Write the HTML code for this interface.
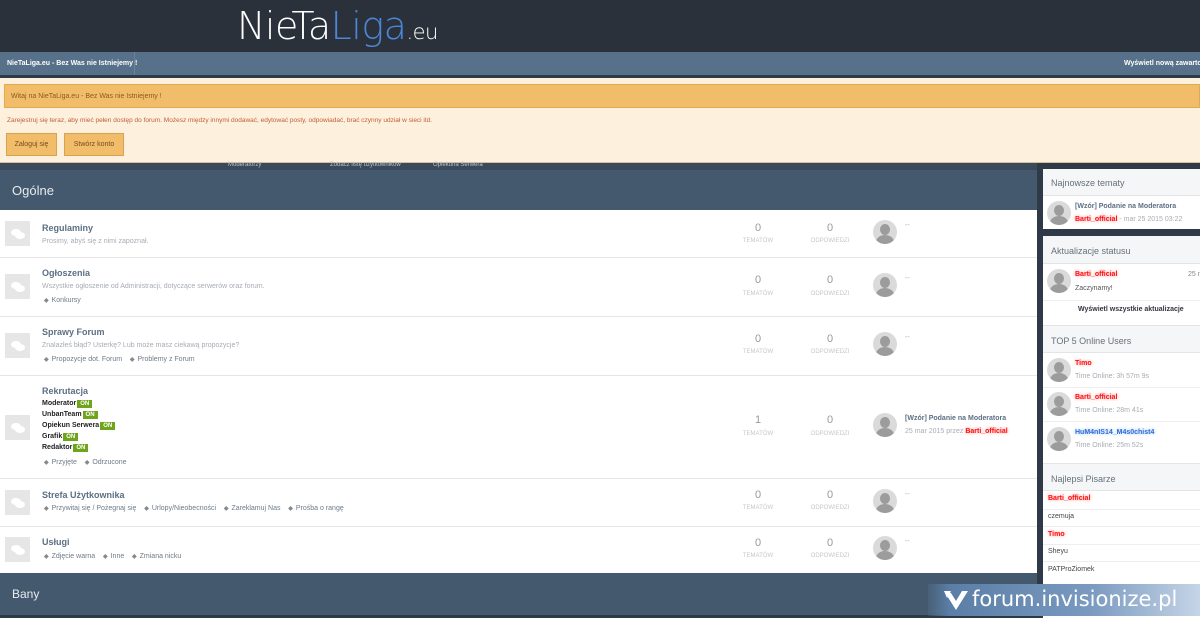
<!DOCTYPE html>
<html><head><meta charset="utf-8"><style>
*{margin:0;padding:0;box-sizing:border-box}
body{width:1200px;height:618px;overflow:hidden;position:relative;background:#2e3a47;font-family:"Liberation Sans",sans-serif;}
.a{position:absolute;white-space:nowrap}
.row{position:absolute;left:0;width:1037px;background:#fff;border-bottom:1px solid #e6e6e6}
.ic{position:absolute;left:5px;width:25px;height:25px;background:#e6e6e6}
.ic:after{content:"";position:absolute;left:6px;top:8px;width:10px;height:7px;background:#fff;border-radius:50%;box-shadow:4px 3px 0 #fff}
.t{font-size:9px;font-weight:bold;color:#5b6f84}
.d{font-size:7px;color:#a7acb3}
.s{font-size:7px;color:#6d7b8a}
.s b{color:#888;font-size:6px;margin-right:3px}
.n{font-size:11px;color:#999;text-align:center;width:60px}
.l{font-size:6px;color:#c7c7c7;text-align:center;width:60px}
.av{position:absolute;width:24px;height:24px;border-radius:50%;background:#dadada;overflow:hidden}
.av:before{content:"";position:absolute;left:7px;top:4px;width:10px;height:11px;border-radius:50%;background:#9c9c9c}
.av:after{content:"";position:absolute;left:3px;top:15px;width:18px;height:14px;border-radius:50%;background:#9c9c9c}
.on{background:#6ea51d;color:#fff;font-size:6px;padding:1px 3px;margin-left:1px}
.k{font-size:7px;color:#222;font-weight:bold}
.red{color:#f11;font-weight:bold;text-shadow:0 0 3px #f88}
.sb{position:absolute;left:1043px;width:157px;background:#fff}
.sh{position:absolute;left:1043px;width:157px;background:#f5f6f7;border-bottom:1px solid #e4e4e4;font-size:9px;color:#66707a;padding-left:8px}
.btn{position:absolute;top:133px;height:23px;background:#f2bd6a;border:1px solid #d9a24e;font-size:7px;color:#7a4a1a;text-align:center;line-height:21px}
</style></head><body>
<div class="a" style="left:0;top:0;width:1200px;height:52px;background:#2b313b"></div>
<div class="a" style="left:237px;top:4px;font-size:38px;color:#fff;letter-spacing:-0.5px;font-family:'DejaVu Sans',sans-serif;font-weight:200">NieTa<span style="color:#4d86d6">Liga</span><span style="font-size:21px">.eu</span></div>
<div class="a" style="left:0;top:52px;width:1200px;height:23px;background:#57718a"></div>
<div class="a" style="left:0;top:52px;width:135px;height:23px;border-right:1px solid #6a839b"></div>
<div class="a" style="left:7px;top:60px;font-size:7px;color:#fff;font-weight:bold">NieTaLiga.eu - Bez Was nie Istniejemy !</div>
<div class="a" style="left:1124px;top:60px;font-size:7px;color:#fff;font-weight:bold">Wyświetl nową zawartość</div>
<div class="a" style="left:0;top:78px;width:1200px;height:85px;background:#fdf0dc;border-bottom:1px solid #d6c09a"></div>
<div class="a" style="left:4px;top:84px;width:1196px;height:24px;background:#f2bd6a;border:1px solid #e3a94c"></div>
<div class="a" style="left:11px;top:93px;font-size:7px;color:#8a5a1e">Witaj na NieTaLiga.eu - Bez Was nie Istniejemy !</div>
<div class="a" style="left:7px;top:117px;font-size:6.5px;color:#c0603a">Zarejestruj się teraz, aby mieć pełen dostęp do forum. Możesz między innymi dodawać, edytować posty, odpowiadać, brać czynny udział w sieci itd.</div>
<div class="btn" style="left:6px;width:51px">Zaloguj się</div>
<div class="btn" style="left:64px;width:60px">Stwórz konto</div>
<div class="a" style="left:0;top:163px;width:1037px;height:7px;background:#3b4a5a"></div>
<div class="a" style="left:228px;top:162px;font-size:6px;color:#b8c2cc">Moderatorzy</div>
<div class="a" style="left:330px;top:162px;font-size:6px;color:#b8c2cc">Zobacz listę użytkowników</div>
<div class="a" style="left:433px;top:162px;font-size:6px;color:#b8c2cc">Opiekuna Serwera</div>
<div class="a" style="left:0;top:170px;width:1037px;height:40px;background:#44596d"></div>
<div class="a" style="left:12px;top:183px;font-size:13px;color:#e6ebf0">Ogólne</div>

<div class="row" style="top:210px;height:48px"></div>
<div class="row" style="top:258px;height:59px"></div>
<div class="row" style="top:317px;height:59px"></div>
<div class="row" style="top:376px;height:103px"></div>
<div class="row" style="top:479px;height:48px"></div>
<div class="row" style="top:527px;height:46px;border:0"></div>

<div class="ic" style="top:221px"></div>
<div class="a t" style="left:42px;top:223px">Regulaminy</div>
<div class="a d" style="left:42px;top:238px">Prosimy, abyś się z nimi zapoznał.</div>
<div class="a n" style="left:728px;top:222px">0</div><div class="a l" style="left:728px;top:238px">TEMATÓW</div>
<div class="a n" style="left:800px;top:222px">0</div><div class="a l" style="left:800px;top:238px">ODPOWIEDZI</div>
<div class="av" style="left:873px;top:220px"></div><div class="a d" style="left:905px;top:222px">--</div>

<div class="ic" style="top:274px"></div>
<div class="a t" style="left:42px;top:268px">Ogłoszenia</div>
<div class="a d" style="left:42px;top:283px">Wszystkie ogłoszenie od Administracji, dotyczące serwerów oraz forum.</div>
<div class="a s" style="left:44px;top:297px"><b>◆</b>Konkursy</div>
<div class="a n" style="left:728px;top:274px">0</div><div class="a l" style="left:728px;top:291px">TEMATÓW</div>
<div class="a n" style="left:800px;top:274px">0</div><div class="a l" style="left:800px;top:291px">ODPOWIEDZI</div>
<div class="av" style="left:873px;top:273px"></div><div class="a d" style="left:905px;top:275px">--</div>

<div class="ic" style="top:333px"></div>
<div class="a t" style="left:42px;top:327px">Sprawy Forum</div>
<div class="a d" style="left:42px;top:342px">Znalazłeś błąd? Usterkę? Lub może masz ciekawą propozycje?</div>
<div class="a s" style="left:44px;top:356px"><b>◆</b>Propozycje dot. Forum &nbsp;&nbsp;&nbsp;<b>◆</b>Problemy z Forum</div>
<div class="a n" style="left:728px;top:333px">0</div><div class="a l" style="left:728px;top:349px">TEMATÓW</div>
<div class="a n" style="left:800px;top:333px">0</div><div class="a l" style="left:800px;top:349px">ODPOWIEDZI</div>
<div class="av" style="left:873px;top:332px"></div><div class="a d" style="left:905px;top:334px">--</div>

<div class="ic" style="top:415px"></div>
<div class="a t" style="left:42px;top:386px">Rekrutacja</div>
<div class="a k" style="left:42px;top:400px">Moderator<span class="on">ON</span></div>
<div class="a k" style="left:42px;top:411px">UnbanTeam<span class="on">ON</span></div>
<div class="a k" style="left:42px;top:422px">Opiekun Serwera<span class="on">ON</span></div>
<div class="a k" style="left:42px;top:433px">Grafik<span class="on">ON</span></div>
<div class="a k" style="left:42px;top:444px">Redaktor<span class="on">ON</span></div>
<div class="a s" style="left:44px;top:459px"><b>◆</b>Przyjęte &nbsp;&nbsp;&nbsp;<b>◆</b>Odrzucone</div>
<div class="a n" style="left:728px;top:414px">1</div><div class="a l" style="left:728px;top:431px">TEMATÓW</div>
<div class="a n" style="left:800px;top:414px">0</div><div class="a l" style="left:800px;top:431px">ODPOWIEDZI</div>
<div class="av" style="left:873px;top:413px"></div>
<div class="a" style="left:905px;top:415px;font-size:7px;color:#5b6f84;font-weight:bold">[Wzór] Podanie na Moderatora</div>
<div class="a d" style="left:905px;top:428px">25 mar 2015 przez <span class="red">Barti_official</span></div>

<div class="ic" style="top:490px"></div>
<div class="a t" style="left:42px;top:490px">Strefa Użytkownika</div>
<div class="a s" style="left:44px;top:505px"><b>◆</b>Przywitaj się / Pożegnaj się &nbsp;&nbsp;&nbsp;<b>◆</b>Urlopy/Nieobecności &nbsp;&nbsp;&nbsp;<b>◆</b>Zareklamuj Nas &nbsp;&nbsp;&nbsp;<b>◆</b>Prośba o rangę</div>
<div class="a n" style="left:728px;top:489px">0</div><div class="a l" style="left:728px;top:505px">TEMATÓW</div>
<div class="a n" style="left:800px;top:489px">0</div><div class="a l" style="left:800px;top:505px">ODPOWIEDZI</div>
<div class="av" style="left:873px;top:489px"></div><div class="a d" style="left:905px;top:491px">--</div>

<div class="ic" style="top:537px"></div>
<div class="a t" style="left:42px;top:537px">Usługi</div>
<div class="a s" style="left:44px;top:553px"><b>◆</b>Zdjęcie warna &nbsp;&nbsp;&nbsp;<b>◆</b>Inne &nbsp;&nbsp;&nbsp;<b>◆</b>Zmiana nicku</div>
<div class="a n" style="left:728px;top:537px">0</div><div class="a l" style="left:728px;top:553px">TEMATÓW</div>
<div class="a n" style="left:800px;top:537px">0</div><div class="a l" style="left:800px;top:553px">ODPOWIEDZI</div>
<div class="av" style="left:873px;top:536px"></div><div class="a d" style="left:905px;top:538px">--</div>

<div class="a" style="left:0;top:573px;width:1037px;height:42px;background:#44596d"></div>
<div class="a" style="left:12px;top:587px;font-size:12px;color:#e6ebf0">Bany</div>

<div class="sb" style="top:169px;height:60px"></div>
<div class="sh a" style="top:169px;height:27px;padding-top:9px">Najnowsze tematy</div>
<div class="av" style="left:1047px;top:201px"></div>
<div class="a" style="left:1075px;top:203px;font-size:7px;color:#5b6f84;font-weight:bold">[Wzór] Podanie na Moderatora</div>
<div class="a d" style="left:1075px;top:216px"><span class="red">Barti_official</span> - mar 25 2015 03:22</div>

<div class="sb" style="top:236px;height:382px"></div>
<div class="sh a" style="top:236px;height:28px;padding-top:10px">Aktualizacje statusu</div>
<div class="av" style="left:1047px;top:269px"></div>
<div class="a" style="left:1075px;top:271px;font-size:7px"><span class="red">Barti_official</span></div>
<div class="a" style="left:1188px;top:271px;font-size:7px;color:#888">25 m</div>
<div class="a" style="left:1075px;top:285px;font-size:7px;color:#555">Zaczynamy!</div>
<div class="a" style="left:1043px;top:300px;width:157px;border-top:1px solid #eee"></div>
<div class="a" style="left:1078px;top:306px;font-size:7px;color:#334;font-weight:bold">Wyświetl wszystkie aktualizacje</div>
<div class="sh a" style="top:325px;height:28px;padding-top:10px;border-top:1px solid #e4e4e4">TOP 5 Online Users</div>
<div class="av" style="left:1047px;top:358px"></div>
<div class="a" style="left:1075px;top:360px;font-size:7px"><span class="red">Timo</span></div>
<div class="a d" style="left:1075px;top:373px">Time Online: 3h 57m 9s</div>
<div class="a" style="left:1043px;top:387px;width:157px;border-top:1px solid #eee"></div>
<div class="av" style="left:1047px;top:392px"></div>
<div class="a" style="left:1075px;top:394px;font-size:7px"><span class="red">Barti_official</span></div>
<div class="a d" style="left:1075px;top:407px">Time Online: 28m 41s</div>
<div class="a" style="left:1043px;top:421px;width:157px;border-top:1px solid #eee"></div>
<div class="av" style="left:1047px;top:427px"></div>
<div class="a" style="left:1075px;top:429px;font-size:7px;color:#2a6ee0;font-weight:bold;text-shadow:0 0 3px #9bd">HuM4nIS14_M4s0chist4</div>
<div class="a d" style="left:1075px;top:442px">Time Online: 25m 52s</div>
<div class="sh a" style="top:463px;height:28px;padding-top:10px;border-top:1px solid #e4e4e4">Najlepsi Pisarze</div>
<div class="a" style="left:1048px;top:495px;font-size:7px"><span class="red">Barti_official</span></div>
<div class="a" style="left:1043px;top:509px;width:157px;border-top:1px solid #eee"></div>
<div class="a" style="left:1048px;top:513px;font-size:7px;color:#444">czemuja</div>
<div class="a" style="left:1043px;top:526px;width:157px;border-top:1px solid #eee"></div>
<div class="a" style="left:1048px;top:531px;font-size:7px"><span class="red">Timo</span></div>
<div class="a" style="left:1043px;top:544px;width:157px;border-top:1px solid #eee"></div>
<div class="a" style="left:1048px;top:548px;font-size:7px;color:#444">Sheyu</div>
<div class="a" style="left:1043px;top:561px;width:157px;border-top:1px solid #eee"></div>
<div class="a" style="left:1048px;top:566px;font-size:7px;color:#444">PATProZiomek</div>

<div class="a" style="left:928px;top:584px;width:272px;height:32px;background:linear-gradient(90deg,rgba(90,125,165,0.2),#5a7ea6 8%,#7a9ac0 60%,rgba(160,185,215,0.6))"></div>
<svg class="a" style="left:943px;top:590px" width="26" height="22" viewBox="0 0 26 22"><path d="M1 1 L13 20 L25 1 L19 1 L13 11 L8 3 Z" fill="#fff"/><path d="M1 1 L8 1 L4 8 Z" fill="#fff"/></svg>
<div class="a" style="left:972px;top:587px;font-size:21px;color:#fff;font-family:'DejaVu Sans',sans-serif">forum.invisionize.pl</div>
</body></html>
